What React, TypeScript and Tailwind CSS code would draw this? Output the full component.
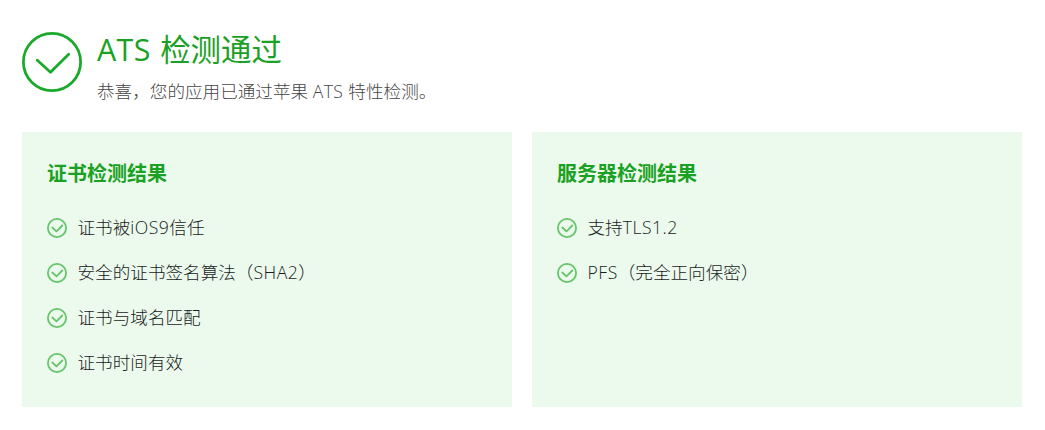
const certificateResults = [
  { before: "证书被", latin: "iOS9", after: "信任" },
  { before: "安全的证书签名算法（", latin: "SHA2", after: "）" },
  { before: "证书与域名匹配" },
  { before: "证书时间有效" },
];
const serverResults = [
  { before: "支持", latin: "TLS1.2" },
  { before: "", latin: "PFS", after: "（完全正向保密）" },
];

type Result = { before: string; latin?: string; after?: string };

function SmallCheck() {
  return (
    <svg className="h-[22px] w-[22px] shrink-0" viewBox="0 0 22 22" fill="none" stroke="#66c56b" strokeLinecap="round" strokeLinejoin="round">
      <circle cx="11" cy="11" r="9.1" strokeWidth="1.8" />
      <path d="M6.3 10.5 10.5 14.3 16.3 8.5" strokeWidth="1.8" />
    </svg>
  );
}

function Panel({ title, items }: { title: string; items: Result[] }) {
  return (
    <section className="h-[275px] w-[490px] bg-[#ebfaed] px-6 pt-[27px]">
      <h2 className="pl-px text-[20px] leading-[30px] font-bold text-[#1aa123]">{title}</h2>
      <ul className="mt-4">
        {items.map((item) => (
          <li key={item.before + item.latin} className="flex h-[45px] items-center gap-[9.5px] text-[17.6px] text-[#1a1a1a]">
            <SmallCheck />
            <span className="whitespace-nowrap">
              {item.before}
              <span className="font-[350] tracking-[0.5px]">{item.latin}</span>
              {item.after}
            </span>
          </li>
        ))}
      </ul>
    </section>
  );
}

export default function App() {
  return (
    <main className="h-[430px] w-[1045px] bg-white px-[22px] pt-[31px] font-['Open_Sans','Noto_Sans_CJK_SC',sans-serif] font-light">
      <header className="flex h-[101px] gap-[15px]">
        <svg className="mt-px h-[60px] w-[60px]" viewBox="0 0 60 60" fill="none" stroke="#1aa92a" strokeLinecap="round" strokeLinejoin="round">
          <circle cx="30" cy="30" r="28.6" strokeWidth="2.8" />
          <path d="M15.3 28.2 28.5 40.2 46.7 22.2" strokeWidth="2.8" />
        </svg>
        <div>
          <h1 className="-mt-px text-[30.4px] leading-[40px] font-normal text-[#1aa123]">
            <span className="mr-[1.5px] tracking-[0.4px]">ATS</span> 检测通过
          </h1>
          <p className="mt-[7px] text-[17.6px] leading-[28px] text-[#444]">
            恭喜，您的应用已通过苹果 <span className="mr-[0.5px] font-[350] tracking-[0.4px]">ATS</span> 特性检测。
          </p>
        </div>
      </header>
      <div className="flex gap-5">
        <Panel title="证书检测结果" items={certificateResults} />
        <Panel title="服务器检测结果" items={serverResults} />
      </div>
    </main>
  );
}
